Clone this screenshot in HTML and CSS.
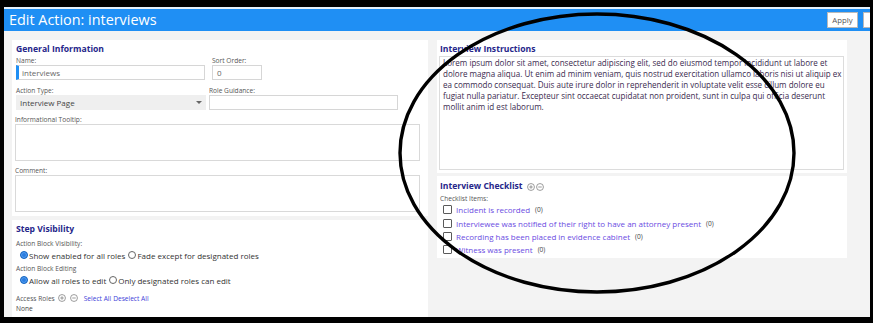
FILE: index.html
```html
<!DOCTYPE html>
<html>
<head lang="en">
    <meta charset="UTF-8">
    <title>Edit Action: interviews</title>
    <link rel="stylesheet" href="styles.css">
</head>
<body>
<div class="frame">
    <div class="topline"></div>
    <div class="titlebar">
        <h1>Edit Action: interviews</h1>
        <div class="actions">
            <span class="btn">Apply</span>
            <span class="btn">Save</span>
        </div>
    </div>
    <div class="content">
        <div class="col">
            <div class="card general">
                <h2>General Information</h2>
                <div class="row">
                    <div class="field w-name">
                        <label>Name:</label>
                        <div class="input focus">interviews</div>
                    </div>
                    <div class="field w-sort">
                        <label>Sort Order:</label>
                        <div class="input">0</div>
                    </div>
                </div>
                <div class="row tight">
                    <div class="field w-type">
                        <label>Action Type:</label>
                        <div class="select">Interview Page<span class="caret"></span></div>
                    </div>
                    <div class="field w-role">
                        <label>Role Guidance:</label>
                        <div class="input"></div>
                    </div>
                </div>
                <div class="field area-field">
                    <label>Informational Tooltip:</label>
                    <div class="textarea"></div>
                </div>
                <div class="field area-field">
                    <label>Comment:</label>
                    <div class="textarea"></div>
                </div>
            </div>
            <div class="card visibility">
                <h2>Step Visibility</h2>
                <label>Action Block Visibility:</label>
                <div class="radios">
                    <span class="radio on"></span>Show enabled for all roles
                    <span class="radio"></span>Fade except for designated roles
                </div>
                <label>Action Block Editing</label>
                <div class="radios">
                    <span class="radio on"></span>Allow all roles to edit
                    <span class="radio"></span>Only designated roles can edit
                </div>
                <div class="roles">
                    <label>Access Roles</label>
                    <svg class="icon" viewBox="0 0 10 10"><circle cx="5" cy="5" r="4.3"/><path d="M2.8 5h4.4M5 2.8v4.4"/></svg>
                    <svg class="icon" viewBox="0 0 10 10"><circle cx="5" cy="5" r="4.3"/><path d="M2.8 5h4.4"/></svg>
                    <a href="#" class="act">Select All</a>
                    <a href="#" class="act">Deselect All</a>
                </div>
                <div class="none">None</div>
            </div>
        </div>
        <div class="col right">
            <div class="card instructions">
                <h2>Interview Instructions</h2>
                <div class="textarea lorem">
                    Lorem ipsum dolor sit amet, consectetur adipiscing elit, sed do eiusmod tempor incididunt ut labore et<br>
                    dolore magna aliqua. Ut enim ad minim veniam, quis nostrud exercitation ullamco laboris nisi ut aliquip ex<br>
                    ea commodo consequat. Duis aute irure dolor in reprehenderit in voluptate velit esse cillum dolore eu<br>
                    fugiat nulla pariatur. Excepteur sint occaecat cupidatat non proident, sunt in culpa qui officia deserunt<br>
                    mollit anim id est laborum.
                </div>
            </div>
            <div class="card checklist">
                <div class="head">
                    <h2>Interview Checklist</h2>
                    <svg class="icon" viewBox="0 0 10 10"><circle cx="5" cy="5" r="4.3"/><path d="M2.8 5h4.4M5 2.8v4.4"/></svg>
                    <svg class="icon" viewBox="0 0 10 10"><circle cx="5" cy="5" r="4.3"/><path d="M2.8 5h4.4"/></svg>
                </div>
                <label>Checklist Items:</label>
                <ul>
                    <li><span class="box"></span><a href="#">Incident is recorded</a><span class="count">(0)</span></li>
                    <li><span class="box"></span><a href="#">Interviewee was notified of their right to have an attorney present</a><span class="count">(0)</span></li>
                    <li><span class="box"></span><a href="#">Recording has been placed in evidence cabinet</a><span class="count">(0)</span></li>
                    <li><span class="box"></span><a href="#">Witness was present</a><span class="count">(0)</span></li>
                </ul>
            </div>
        </div>
    </div>
</div>
<svg class="mark" viewBox="0 0 873 323"><ellipse cx="597" cy="153" rx="197" ry="139"/></svg>
</body>
</html>
```

FILE: styles.css
```css
*
{
    margin: 0;
    padding: 0;
    box-sizing: border-box;
}
html, body
{
    width: 873px;
    height: 323px;
    overflow: hidden;
}
body
{
    background: #000;
    font-family: "Open Sans", sans-serif;
    color: #333;
    position: relative;
}
.frame
{
    margin: 7px 3px 0 4px;
    height: 310px;
    background: #f3f3f3;
    overflow: hidden;
}
.topline
{
    height: 2px;
    background: #e6f1fc;
}
.titlebar
{
    height: 22px;
    background: #1f8ff4;
    display: flex;
    align-items: center;
    padding-left: 5px;
}
.titlebar h1
{
    font-weight: normal;
    font-size: 14.4px;
    color: #fff;
    line-height: 22px;
}
.actions
{
    margin-left: auto;
    margin-right: -24px;
    display: flex;
    gap: 5px;
}
.btn
{
    display: block;
    width: 31px;
    height: 16px;
    background: #fff;
    border: 1px solid #b9b9b9;
    font-size: 7.8px;
    line-height: 14px;
    text-align: center;
    color: #555;
}
.content
{
    display: grid;
    grid-template-columns: 416px 410px;
    gap: 9px;
    padding: 9px 0 0 8px;
}
.col
{
    display: flex;
    flex-direction: column;
    gap: 4px;
}
.col.right
{
    gap: 3px;
}
.card
{
    background: #fff;
    padding: 3px 4px 4px 4px;
}
h2
{
    font-size: 8.6px;
    font-weight: bold;
    color: #26268a;
    line-height: 13px;
}
label
{
    display: block;
    font-size: 6.6px;
    line-height: 9px;
    color: #555;
}
.row
{
    display: flex;
    gap: 7px;
}
.row.tight
{
    gap: 3px;
    margin-top: 6px;
}
.w-name { width: 189px; }
.w-sort { width: 50px; }
.w-type { width: 190px; }
.w-role { width: 189px; }
.input
{
    height: 15px;
    border: 1px solid #d6d6d6;
    font-size: 8px;
    line-height: 13px;
    padding-left: 4px;
    color: #666;
}
.input.focus
{
    border-left: 3px solid #1f8ff4;
    padding-left: 3px;
}
.select
{
    height: 15px;
    background: #efefef;
    font-size: 8px;
    line-height: 15px;
    padding-left: 4px;
    color: #444;
    position: relative;
}
.caret
{
    position: absolute;
    right: 4px;
    top: 6px;
    border-left: 3px solid transparent;
    border-right: 3px solid transparent;
    border-top: 3px solid #666;
}
.area-field
{
    margin-top: 5px;
    margin-left: -1px;
    width: 405px;
}
.textarea
{
    height: 37px;
    border: 1px solid #d9d9d9;
    background: #fff;
}
.visibility
{
    padding-top: 3px;
    height: 100px;
}
.visibility label
{
    margin-top: 3px;
}
.radios
{
    display: flex;
    align-items: center;
    height: 12px;
    margin-top: 1px;
    padding-left: 4px;
    font-size: 8px;
    color: #333;
    white-space: nowrap;
}
.radio
{
    display: inline-block;
    width: 8px;
    height: 8px;
    border-radius: 50%;
    border: 1px solid #666;
    margin-right: 1px;
    margin-left: 3px;
}
.radio:first-child
{
    margin-left: 0;
}
.radio.on
{
    border: 1px solid #1565c0;
    background: #2a7de1;
    box-shadow: inset 0 0 0 1px #5aa2f0;
}
.roles
{
    display: flex;
    align-items: center;
    margin-top: 6px;
    height: 12px;
}
.roles label
{
    margin-top: 0;
    margin-right: 3px;
}
.roles .icon
{
    margin-right: 4px;
}
.icon
{
    width: 8px;
    height: 8px;
    fill: none;
    stroke: #777;
    stroke-width: 0.9;
}
a.act
{
    font-size: 6.6px;
    color: #3d3dd8;
    text-decoration: none;
    margin-left: 2px;
}
.none
{
    font-size: 6.6px;
    line-height: 9px;
    color: #444;
}
.instructions
{
    padding: 3px 3px 3px 2px;
}
.instructions h2
{
    padding-left: 1px;
}
.lorem
{
    height: 114px;
    border-color: #dcdcdc;
    font-size: 8.05px;
    line-height: 11px;
    padding: 0 0 0 3px;
    color: #3a2a4e;
    white-space: nowrap;
}
.checklist
{
    padding: 4px 4px 1px 3px;
}
.checklist .head
{
    display: flex;
    align-items: center;
    gap: 1px;
}
.checklist .head h2
{
    margin-right: 3px;
}
.checklist label
{
    margin-top: 1px;
}
ul
{
    list-style: none;
    padding-left: 3px;
}
li
{
    display: flex;
    align-items: center;
    height: 13.4px;
    font-size: 8px;
}
.box
{
    width: 9px;
    height: 9px;
    border: 1px solid #5a5a5a;
    border-radius: 1px;
    margin-right: 4px;
}
li a
{
    color: #6a4be2;
    text-decoration: none;
}
.count
{
    font-size: 6.6px;
    color: #444;
    margin-left: 5px;
}
.mark
{
    position: absolute;
    left: 0;
    top: 0;
    width: 873px;
    height: 323px;
    fill: none;
    stroke: #000;
    stroke-width: 3.4;
    pointer-events: none;
}
```
